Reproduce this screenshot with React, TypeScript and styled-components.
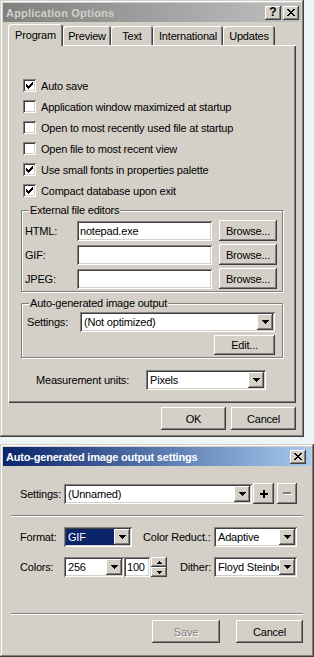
import React from 'react'
import styled, { createGlobalStyle, css } from 'styled-components'

const FACE = '#d4d0c8'
const LIGHT = '#ffffff'
const SHADOW = '#808080'
const DARK = '#404040'

const GlobalStyle = createGlobalStyle`
  html, body {
    margin: 0;
    padding: 0;
    overflow: hidden;
  }
  body {
    background: #eef6f5;
    font-family: 'Liberation Sans', Arial, sans-serif;
    font-size: 11px;
    letter-spacing: -0.2px;
    color: #000;
  }
`

const raised = css`
  box-shadow: inset -1px -1px 0 ${DARK}, inset 1px 1px 0 ${LIGHT},
    inset -2px -2px 0 ${SHADOW}, inset 2px 2px 0 ${FACE};
`

const sunken = css`
  box-shadow: inset 1px 1px 0 ${SHADOW}, inset -1px -1px 0 ${LIGHT},
    inset 2px 2px 0 ${DARK}, inset -2px -2px 0 ${FACE};
`

const Page = styled.div`
  display: flex;
  flex-direction: column;
  align-items: flex-start;
  gap: 7px;
`

const Window = styled.div<{ $w: number; $h: number }>`
  width: ${({ $w }) => $w}px;
  height: ${({ $h }) => $h}px;
  flex-shrink: 0;
  box-sizing: border-box;
  padding: 3px;
  background: ${FACE};
  box-shadow: inset -1px -1px 0 ${DARK}, inset 1px 1px 0 ${FACE},
    inset -2px -2px 0 ${SHADOW}, inset 2px 2px 0 ${LIGHT};
  display: flex;
  flex-direction: column;
`

const TitleBar = styled.div<{ $active?: boolean; $padRight: number }>`
  height: 19px;
  flex-shrink: 0;
  display: flex;
  align-items: center;
  justify-content: space-between;
  padding: 0 ${({ $padRight }) => $padRight}px 0 3px;
  background: ${({ $active }) =>
    $active
      ? 'linear-gradient(to right, #0a246a, #a6caf0)'
      : 'linear-gradient(to right, #808080, #c0c0c0)'};
`

const TitleText = styled.span<{ $active?: boolean; $spacing: number }>`
  font-weight: bold;
  font-size: 11px;
  letter-spacing: ${({ $spacing }) => $spacing}px;
  white-space: nowrap;
  color: ${({ $active }) => ($active ? '#ffffff' : FACE)};
`

const CaptionButtons = styled.div`
  display: flex;
  gap: 2px;
`

const CaptionButton = styled.div`
  width: 16px;
  height: 14px;
  box-sizing: border-box;
  background: ${FACE};
  ${raised};
  display: flex;
  align-items: center;
  justify-content: center;
  font-weight: bold;
  font-size: 12px;
  letter-spacing: 0;
  line-height: 1;
  padding-bottom: 1px;
`

const DialogBody = styled.div`
  display: flex;
  flex-direction: column;
  padding: 2px 5px 0;
`

const TabStrip = styled.div`
  display: flex;
  align-items: flex-end;
  height: 21px;
`

const Tab = styled.div<{ $w: number; $selected?: boolean }>`
  width: ${({ $w }) => $w}px;
  height: ${({ $selected }) => ($selected ? 22 : 19)}px;
  margin-bottom: ${({ $selected }) => ($selected ? -1 : 0)}px;
  box-sizing: border-box;
  flex-shrink: 0;
  background: ${FACE};
  border-radius: 3px 3px 0 0;
  box-shadow: inset 1px 1px 0 ${LIGHT}, inset -1px 0 0 ${DARK},
    inset -2px 0 0 ${SHADOW};
  display: flex;
  align-items: center;
  justify-content: center;
  position: relative;
  z-index: ${({ $selected }) => ($selected ? 1 : 0)};
`

const TabPanel = styled.div`
  height: 358px;
  box-sizing: border-box;
  background: ${FACE};
  box-shadow: inset 1px 1px 0 ${LIGHT}, inset -1px -1px 0 ${DARK},
    inset -2px -2px 0 ${SHADOW};
  padding: 30px 13px 0;
  display: flex;
  flex-direction: column;
`

const CheckList = styled.div`
  display: flex;
  flex-direction: column;
  padding-left: 2px;
`

const CheckRow = styled.label`
  height: 21px;
  display: flex;
  align-items: center;
  gap: 5px;
`

const CheckBox = styled.span`
  width: 13px;
  height: 13px;
  box-sizing: border-box;
  background: #ffffff;
  ${sunken};
  display: flex;
  align-items: center;
  justify-content: center;
`

const GroupBox = styled.fieldset<{ $mt: number }>`
  margin: ${({ $mt }) => $mt}px 0 0;
  padding: 0;
  min-width: 0;
  border: 1px solid ${SHADOW};
  box-shadow: inset 1px 1px 0 ${LIGHT}, 1px 1px 0 ${LIGHT};
`

const GroupLegend = styled.legend`
  margin-left: 7px;
  padding: 0 1px;
  line-height: 13px;
  background: ${FACE};
`

const GroupInner = styled.div<{ $pad: string }>`
  display: flex;
  flex-direction: column;
  gap: 3px;
  padding: ${({ $pad }) => $pad};
`

const FieldRow = styled.div<{ $h?: number; $end?: boolean }>`
  display: flex;
  align-items: center;
  height: ${({ $h }) => $h ?? 21}px;
  justify-content: ${({ $end }) => ($end ? 'flex-end' : 'flex-start')};
`

const FieldLabel = styled.span<{ $w: number; $ml?: number }>`
  width: ${({ $w }) => $w}px;
  margin-left: ${({ $ml }) => $ml ?? 0}px;
  flex-shrink: 0;
  white-space: nowrap;
`

const TextBox = styled.div<{ $w: number; $gap?: number }>`
  width: ${({ $w }) => $w}px;
  height: 20px;
  margin-right: ${({ $gap }) => $gap ?? 0}px;
  flex-shrink: 0;
  box-sizing: border-box;
  padding: 2px 2px 2px 3px;
  line-height: 16px;
  background: #ffffff;
  ${sunken};
  white-space: nowrap;
  overflow: hidden;
`

const Button = styled.div<{ $w: number; $h: number; $ml?: number; $disabled?: boolean }>`
  width: ${({ $w }) => $w}px;
  height: ${({ $h }) => $h}px;
  margin-left: ${({ $ml }) => $ml ?? 0}px;
  flex-shrink: 0;
  box-sizing: border-box;
  background: ${FACE};
  ${raised};
  display: flex;
  align-items: center;
  justify-content: center;
  color: ${({ $disabled }) => ($disabled ? SHADOW : '#000')};
  text-shadow: ${({ $disabled }) => ($disabled ? `1px 1px 0 ${LIGHT}` : 'none')};
`

const Combo = styled.div<{ $w: number }>`
  width: ${({ $w }) => $w}px;
  height: 20px;
  flex-shrink: 0;
  box-sizing: border-box;
  padding: 2px;
  background: #ffffff;
  ${sunken};
  display: flex;
`

const ComboText = styled.div<{ $selected?: boolean }>`
  flex: 1;
  min-width: 0;
  padding-left: 2px;
  line-height: 16px;
  white-space: nowrap;
  overflow: hidden;
  background: ${({ $selected }) => ($selected ? '#0a246a' : 'transparent')};
  color: ${({ $selected }) => ($selected ? '#ffffff' : '#000')};
`

const DropButton = styled.div`
  width: 16px;
  flex-shrink: 0;
  box-sizing: border-box;
  background: ${FACE};
  ${raised};
  display: flex;
  align-items: center;
  justify-content: center;
`

const UnitsRow = styled.div`
  display: flex;
  align-items: center;
  height: 20px;
  margin-top: 12px;
  padding-left: 15px;
`

const ButtonRow = styled.div<{ $gap: number; $mt: number }>`
  display: flex;
  justify-content: flex-end;
  gap: ${({ $gap }) => $gap}px;
  margin-top: ${({ $mt }) => $mt}px;
`

const SettingsBody = styled.div`
  display: flex;
  flex-direction: column;
  padding: 17px 8px 0;
`

const SettingsRow = styled.div<{ $mt?: number; $h: number }>`
  display: flex;
  align-items: center;
  height: ${({ $h }) => $h}px;
  margin-top: ${({ $mt }) => $mt ?? 0}px;
  padding-left: 9px;
`

const Separator = styled.div<{ $mt: number }>`
  height: 0;
  margin-top: ${({ $mt }) => $mt}px;
  border-top: 1px solid ${SHADOW};
  border-bottom: 1px solid ${LIGHT};
`

const Spinner = styled.div`
  width: 16px;
  height: 20px;
  margin-left: 1px;
  flex-shrink: 0;
  display: flex;
  flex-direction: column;
`

const SpinButton = styled.div`
  flex: 1;
  box-sizing: border-box;
  background: ${FACE};
  ${raised};
  display: flex;
  align-items: center;
  justify-content: center;
`

const Arrow = () => (
  <svg width="7" height="4" viewBox="0 0 7 4" shapeRendering="crispEdges">
    <path d="M0 0h7v1H0z M1 1h5v1H1z M2 2h3v1H2z M3 3h1v1H3z" fill="#000" />
  </svg>
)

const SmallArrow = ({ up }: { up?: boolean }) => (
  <svg width="5" height="3" viewBox="0 0 5 3" shapeRendering="crispEdges">
    <path
      d={up ? 'M2 0h1v1H2z M1 1h3v1H1z M0 2h5v1H0z' : 'M0 0h5v1H0z M1 1h3v1H1z M2 2h1v1H2z'}
      fill="#000"
    />
  </svg>
)

const CheckMark = () => (
  <svg width="7" height="7" viewBox="0 0 7 7" shapeRendering="crispEdges">
    <path
      d="M6 0h1v1H6z M5 1h2v1H5z M0 2h1v1H0z M4 2h3v1H4z M0 3h2v1H0z M3 3h3v1H3z M0 4h5v1H0z M1 5h3v1H1z M2 6h1v1H2z"
      fill="#000"
    />
  </svg>
)

const CloseGlyph = () => (
  <svg width="8" height="7" viewBox="0 0 8 7" shapeRendering="crispEdges">
    <path
      d="M0 0h2v1H0z M6 0h2v1H6z M1 1h2v1H1z M5 1h2v1H5z M2 2h4v1H2z M3 3h2v1H3z M2 4h4v1H2z M1 5h2v1H1z M5 5h2v1H5z M0 6h2v1H0z M6 6h2v1H6z"
      fill="#000"
    />
  </svg>
)

const PlusGlyph = () => (
  <svg width="8" height="8" viewBox="0 0 8 8" shapeRendering="crispEdges">
    <path d="M3 0h2v8H3z M0 3h8v2H0z" fill="#000" />
  </svg>
)

const MinusGlyph = () => (
  <svg width="9" height="3" viewBox="0 0 9 3" shapeRendering="crispEdges">
    <path d="M1 1h8v2H1z" fill={LIGHT} />
    <path d="M0 0h8v2H0z" fill={SHADOW} />
  </svg>
)

const tabs = [
  { label: 'Program', w: 55, selected: true },
  { label: 'Preview', w: 48 },
  { label: 'Text', w: 42 },
  { label: 'International', w: 70 },
  { label: 'Updates', w: 52 },
]

const checks = [
  { label: 'Auto save', checked: true },
  { label: 'Application window maximized at startup' },
  { label: 'Open to most recently used file at startup' },
  { label: 'Open file to most recent view' },
  { label: 'Use small fonts in properties palette', checked: true },
  { label: 'Compact database upon exit', checked: true },
]

const editors = [
  { label: 'HTML:', value: 'notepad.exe' },
  { label: 'GIF:', value: '' },
  { label: 'JPEG:', value: '' },
]

const ComboBox = ({ w, value, selected }: { w: number; value: string; selected?: boolean }) => (
  <Combo $w={w}>
    <ComboText $selected={selected}>{value}</ComboText>
    <DropButton>
      <Arrow />
    </DropButton>
  </Combo>
)

export default function App() {
  return (
    <>
      <GlobalStyle />
      <Page>
        <Window $w={304} $h={437}>
          <TitleBar $padRight={2}>
            <TitleText $spacing={0.2}>Application Options</TitleText>
            <CaptionButtons>
              <CaptionButton>?</CaptionButton>
              <CaptionButton>
                <CloseGlyph />
              </CaptionButton>
            </CaptionButtons>
          </TitleBar>
          <DialogBody>
            <TabStrip>
              {tabs.map((t) => (
                <Tab key={t.label} $w={t.w} $selected={t.selected}>
                  {t.label}
                </Tab>
              ))}
            </TabStrip>
            <TabPanel>
              <CheckList>
                {checks.map((c) => (
                  <CheckRow key={c.label}>
                    <CheckBox>{c.checked && <CheckMark />}</CheckBox>
                    {c.label}
                  </CheckRow>
                ))}
              </CheckList>

              <GroupBox $mt={3}>
                <GroupLegend>External file editors</GroupLegend>
                <GroupInner $pad="3px 5px 2px 3px">
                  {editors.map((e) => (
                    <FieldRow key={e.label}>
                      <FieldLabel $w={52}>{e.label}</FieldLabel>
                      <TextBox $w={135} $gap={7}>
                        {e.value}
                      </TextBox>
                      <Button $w={58} $h={21}>
                        Browse...
                      </Button>
                    </FieldRow>
                  ))}
                </GroupInner>
              </GroupBox>

              <GroupBox $mt={5}>
                <GroupLegend>Auto-generated image output</GroupLegend>
                <GroupInner $pad="2px 7px 2px 5px">
                  <FieldRow $h={20}>
                    <FieldLabel $w={53}>Settings:</FieldLabel>
                    <ComboBox w={195} value="(Not optimized)" />
                  </FieldRow>
                  <FieldRow $h={20} $end>
                    <Button $w={61} $h={20}>
                      Edit...
                    </Button>
                  </FieldRow>
                </GroupInner>
              </GroupBox>

              <UnitsRow>
                <FieldLabel $w={110}>Measurement units:</FieldLabel>
                <ComboBox w={120} value="Pixels" />
              </UnitsRow>
            </TabPanel>
            <ButtonRow $gap={5} $mt={4}>
              <Button $w={65} $h={23}>
                OK
              </Button>
              <Button $w={65} $h={23}>
                Cancel
              </Button>
            </ButtonRow>
          </DialogBody>
        </Window>

        <Window $w={314} $h={213}>
          <TitleBar $active $padRight={5}>
            <TitleText $active $spacing={-0.2}>
              Auto-generated image output settings
            </TitleText>
            <CaptionButton>
              <CloseGlyph />
            </CaptionButton>
          </TitleBar>
          <SettingsBody>
            <SettingsRow $h={21}>
              <FieldLabel $w={44}>Settings:</FieldLabel>
              <ComboBox w={188} value="(Unnamed)" />
              <Button $w={21} $h={21} $ml={1}>
                <PlusGlyph />
              </Button>
              <Button $w={20} $h={21} $ml={3}>
                <MinusGlyph />
              </Button>
            </SettingsRow>

            <Separator $mt={11} />

            <SettingsRow $h={20} $mt={10}>
              <FieldLabel $w={44}>Format:</FieldLabel>
              <ComboBox w={68} value="GIF" selected />
              <FieldLabel $w={71} $ml={11}>
                Color Reduct.:
              </FieldLabel>
              <ComboBox w={83} value="Adaptive" />
            </SettingsRow>

            <SettingsRow $h={20} $mt={10}>
              <FieldLabel $w={44}>Colors:</FieldLabel>
              <ComboBox w={60} value="256" />
              <TextBox $w={26}>100</TextBox>
              <Spinner>
                <SpinButton>
                  <SmallArrow up />
                </SpinButton>
                <SpinButton>
                  <SmallArrow />
                </SpinButton>
              </Spinner>
              <FieldLabel $w={34} $ml={13}>
                Dither:
              </FieldLabel>
              <ComboBox w={83} value="Floyd Steinberg" />
            </SettingsRow>

            <Separator $mt={36} />

            <ButtonRow $gap={16} $mt={5}>
              <Button $w={68} $h={23} $disabled>
                Save
              </Button>
              <Button $w={67} $h={23}>
                Cancel
              </Button>
            </ButtonRow>
          </SettingsBody>
        </Window>
      </Page>
    </>
  )
}
